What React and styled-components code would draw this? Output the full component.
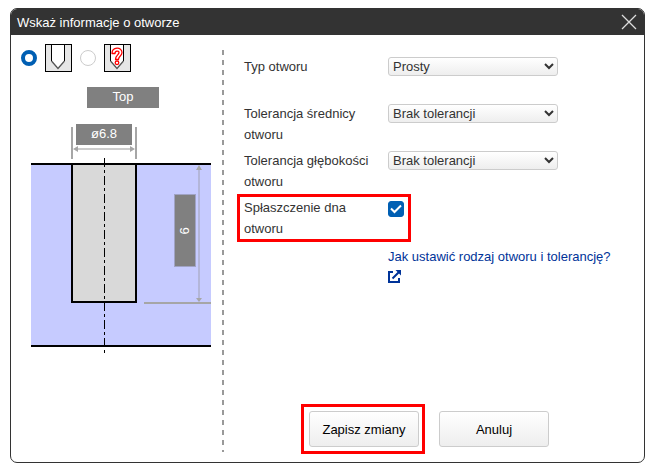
import React from "react";
import styled, { createGlobalStyle, css } from "styled-components";

const Global = createGlobalStyle`
  * { box-sizing: border-box; }
  body {
    margin: 0;
    background: #fff;
    color: #333;
    font: 13px/21px "Liberation Sans", Arial, sans-serif;
  }
`;

const Dialog = styled.section`
  display: flex;
  flex-direction: column;
  min-height: calc(100vh - 14px);
  margin: 8px 7px 6px 10px;
  border: 1px solid #333;
  border-radius: 7px;
  overflow: hidden;
`;

const TitleBar = styled.header`
  display: flex;
  align-items: center;
  justify-content: space-between;
  height: 26px;
  padding: 0 7px 0 6px;
  background: #333;
  color: #fff;
`;

const Title = styled.h1`
  margin: 0;
  font-size: 13px;
  font-weight: normal;
`;

const CloseButton = styled.button`
  display: flex;
  padding: 0;
  border: 0;
  background: none;
  color: #ddd;
  cursor: pointer;
`;

const Content = styled.div`
  flex: 1;
  display: flex;
  padding: 8px 30px 8px 10px;
`;

const Preview = styled.div`
  flex: none;
  display: flex;
  flex-direction: column;
  gap: 15px;
  padding: 1px 11px 0 0;
`;

const Shapes = styled.fieldset`
  display: flex;
  align-items: center;
  margin: 0;
  padding: 0;
  border: 0;
`;

const ShapeOption = styled.label`
  display: flex;
  align-items: center;
  gap: 8px;
  margin-right: 8px;
`;

const Radio = styled.input`
  appearance: none;
  width: 16px;
  height: 16px;
  margin: 0;
  border: 1px solid #ccc;
  border-radius: 50%;
  background: #fff;
  &:checked { border: 4px solid #005fb3; }
`;

const Drawing = styled.svg`
  display: block;
  margin-left: 10px;
  font-size: 13px;
`;

const Settings = styled.div`
  flex: 1;
  display: flex;
  flex-direction: column;
  justify-content: space-between;
  min-width: 0;
  margin-top: 7px;
  padding-left: 22px;
  background: repeating-linear-gradient(#999 0 5px, transparent 5px 10px) 0 0 / 2px calc(100% - 2px) no-repeat;
`;

const Rows = styled.div`
  display: flex;
  flex-direction: column;
  gap: 5px;
  padding-top: 6px;
`;

const Row = styled.div`
  display: grid;
  grid-template-columns: 144px 1fr;
  align-items: start;
  min-height: 42px;
  ${(p) => p.$marked && css`
    align-self: flex-start;
    grid-template-columns: 144px 20px;
    margin-left: -4px;
    padding-left: 4px;
    outline: 3px solid #f00;
  `}
`;

const RowLabel = styled.label`
  padding-right: 16px;
`;

const Select = styled.select`
  width: 170px;
  height: 19px;
  margin: 1px 0;
  padding: 0;
  border: 1px solid #ccc;
  border-radius: 3px;
  background: linear-gradient(#fff, #eee);
  color: #333;
  font: inherit;
  line-height: 17px;
`;

const Check = styled.span`
  display: grid;
  width: 16px;
  margin-top: 4px;
  & > * { grid-area: 1 / 1; }
  svg { pointer-events: none; }
`;

const CheckInput = styled.input`
  appearance: none;
  width: 16px;
  height: 16px;
  margin: 0;
  border: 1px solid #999;
  border-radius: 3px;
  &:checked { background: #005fb3; border-color: #005fb3; }
  &:not(:checked) + svg { visibility: hidden; }
`;

const HelpLink = styled.a`
  margin: 2px 0 0 144px;
  color: #039;
  text-decoration: none;
  svg { display: block; margin-top: 3px; }
`;

const Actions = styled.footer`
  display: flex;
  justify-content: center;
  align-items: center;
  gap: 14px;
  padding-right: 8px;
`;

const Marked = styled.div`
  padding: 4px 3px 4px 5px;
  border: 3px solid #f00;
`;

const Button = styled.button`
  display: block;
  width: 110px;
  height: 36px;
  padding: 0;
  border: 1px solid #ccc;
  border-radius: 3px;
  background: linear-gradient(#fff, #eee);
  color: #000;
  font: inherit;
  cursor: pointer;
`;

function HoleIcon({ unknown }) {
  return (
    <svg width="27" height="28" viewBox="0 0 27 28" aria-hidden="true">
      <rect x="0.5" y="0.5" width="26" height="27" fill="#e6e6e6" stroke="#000" />
      <path d="M6.5 1V17.5L13 24.5L19.5 17.5V1Z" fill="#fff" />
      <path d="M6.5 1V17M19.5 1V17" stroke="#000" />
      <path d="M6.5 17L13 24.5L19.5 17" fill="none" stroke="#555" strokeWidth="1.3" />
      {unknown && (
        <g fill="none" strokeLinejoin="round">
          <path d="M8 9.500C8 2.500 18 2.500 18 8.500C18 12 14.500 12 14.500 15.500H11.500C11.500 11 15 11 15 8.500C15 6.500 11 6.500 11 9.500Z" fill="#fff" stroke="#f00" strokeWidth="1.3" />
          <circle cx="13" cy="18.800" r="1.800" fill="#fff" stroke="#f00" strokeWidth="1.3" />
        </g>
      )}
    </svg>
  );
}

function HoleDrawing() {
  return (
    <Drawing width="180" height="267" viewBox="0 0 180 267" role="img" aria-label="Top">
      <rect y="76" width="180" height="184" fill="#c6cbff" />
      <rect x="42" y="76" width="63" height="139" fill="#d9d9d9" />
      <path d="M0 77H180M0 259H180M41 77V215H105V77" fill="none" stroke="#000" strokeWidth="2" />
      <path d="M73.500 71V266" stroke="#000" strokeDasharray="9 3 3 3" />
      <path d="M41 40V72M105 40V72M113 216H180" stroke="#a6a6a6" strokeWidth="2" />
      <path d="M46 62H101" stroke="#ccc" strokeWidth="2" />
      <path d="M42 62L47 59V65ZM104 62L99 59V65Z" fill="#a6a6a6" />
      <path d="M168 82V211" stroke="#b3b6d9" strokeWidth="2" />
      <path d="M168 78L165 83H171ZM168 215L165 211H171Z" fill="#a6a6a6" />
      <rect x="56" width="72" height="21" fill="#808080" />
      <rect x="45" y="37" width="56" height="21" fill="#808080" />
      <rect x="143.500" y="107.500" width="21" height="72" fill="#808080" stroke="#a0a3c4" />
      <g fill="#fff" textAnchor="middle">
        <text x="92" y="14">Top</text>
        <text x="73" y="51">ø6.8</text>
        <text transform="translate(158 144) rotate(-90)">6</text>
      </g>
    </Drawing>
  );
}

const tolerances = ["Brak tolerancji"];

function SelectRow({ id, label, options }) {
  return (
    <Row>
      <RowLabel htmlFor={id}>{label}</RowLabel>
      <Select id={id}>
        {options.map((o) => <option key={o}>{o}</option>)}
      </Select>
    </Row>
  );
}

export default function App() {
  return (
    <>
      <Global />
      <Dialog role="dialog" aria-labelledby="title">
        <TitleBar>
          <Title id="title">Wskaż informacje o otworze</Title>
          <CloseButton type="button" aria-label="Zamknij">
            <svg width="16" height="16" viewBox="0 0 16 16" stroke="currentColor" strokeWidth="1.3">
              <path d="M1 1L15 15M15 1L1 15" />
            </svg>
          </CloseButton>
        </TitleBar>
        <Content>
          <Preview>
            <Shapes>
              <ShapeOption>
                <Radio type="radio" name="shape" aria-label="Prosty" defaultChecked />
                <HoleIcon />
              </ShapeOption>
              <ShapeOption>
                <Radio type="radio" name="shape" aria-label="Inny" />
                <HoleIcon unknown />
              </ShapeOption>
            </Shapes>
            <HoleDrawing />
          </Preview>
          <Settings>
            <Rows>
              <SelectRow id="type" label="Typ otworu" options={["Prosty"]} />
              <SelectRow id="diameter" label="Tolerancja średnicy otworu" options={tolerances} />
              <SelectRow id="depth" label="Tolerancja głębokości otworu" options={tolerances} />
              <Row $marked>
                <RowLabel htmlFor="flat">Spłaszczenie dna otworu</RowLabel>
                <Check>
                  <CheckInput id="flat" type="checkbox" defaultChecked />
                  <svg width="16" height="16" viewBox="0 0 16 16" fill="none" stroke="#fff" strokeWidth="2">
                    <path d="M3 7.500L6.500 11L13 4.500" />
                  </svg>
                </Check>
              </Row>
              <HelpLink href="#help">
                Jak ustawić rodzaj otworu i tolerancję?
                <svg width="13" height="13" viewBox="0 0 13 13" fill="none" stroke="currentColor" strokeWidth="2">
                  <path d="M5 2H1V12H11V8M4.500 8.500L11 2" />
                  <path d="M7.500 0H13V5.500Z" fill="currentColor" stroke="none" />
                </svg>
              </HelpLink>
            </Rows>
            <Actions>
              <Marked>
                <Button type="submit">Zapisz zmiany</Button>
              </Marked>
              <Button type="button">Anuluj</Button>
            </Actions>
          </Settings>
        </Content>
      </Dialog>
    </>
  );
}
